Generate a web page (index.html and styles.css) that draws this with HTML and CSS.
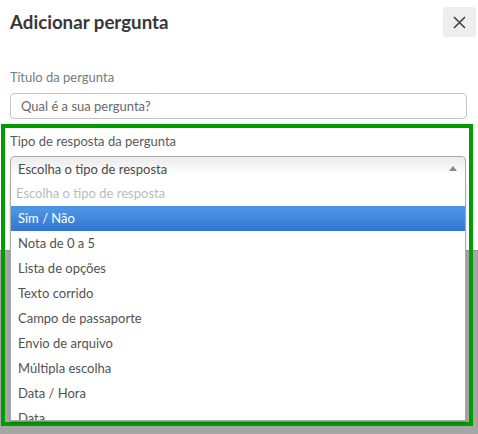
FILE: index.html
```html
<!DOCTYPE html>
<html lang="pt-BR">
<head>
    <meta charset="UTF-8">
    <meta name="viewport" content="width=device-width, initial-scale=1.0">
    <title>Adicionar pergunta</title>
    <link rel="stylesheet" href="styles.css">
</head>
<body>
    <div class="modal">
        <div class="modal-header">
            <h2>Adicionar pergunta</h2>
            <button class="close-btn" aria-label="Fechar">
                <svg width="13" height="13" viewBox="0 0 13 13">
                    <path d="M1 1 L12 12 M12 1 L1 12" stroke="#444" stroke-width="1.6" fill="none"/>
                </svg>
            </button>
        </div>

        <div class="field">
            <label for="titulo">Título da pergunta</label>
            <input type="text" id="titulo" placeholder="Qual é a sua pergunta?">
        </div>

        <div class="field highlight">
            <label>Tipo de resposta da pergunta</label>
            <div class="chosen">
                <div class="chosen-single">
                    <span>Escolha o tipo de resposta</span>
                    <b class="arrow"></b>
                </div>
                <ul class="chosen-results">
                    <li class="disabled">Escolha o tipo de resposta</li>
                    <li class="highlighted">Sim / Não</li>
                    <li>Nota de 0 a 5</li>
                    <li>Lista de opções</li>
                    <li>Texto corrido</li>
                    <li>Campo de passaporte</li>
                    <li>Envio de arquivo</li>
                    <li>Múltipla escolha</li>
                    <li>Data / Hora</li>
                    <li>Data</li>
                </ul>
            </div>
        </div>
    </div>
</body>
</html>
```

FILE: styles.css
```css
html {
    height: 100%;
}
body {
    font-family: 'Lato', 'Open Sans', sans-serif;
    /* white modal on top, grey backdrop below it */
    background: linear-gradient(#fff 250px, #939393 250px, #939393 251px, #a6a6a6 251px);
    min-height: 100%;
    margin: 0;
    color: #444;
}
.modal-header {
    display: flex;
    justify-content: space-between;
    align-items: center;
    padding: 7px 2px 0 10px;
}
.modal-header h2 {
    margin: 0;
    font-size: 18.7px;
    line-height: 30px;
    font-weight: 700;
    color: #383838;
}
.close-btn {
    width: 33px;
    height: 30px;
    border: none;
    border-radius: 3px;
    background: #eee;
    display: flex;
    align-items: center;
    justify-content: center;
    padding: 0;
}
.field {
    padding: 0 11px 0 10px;
    margin-top: 31px;
}
.field label {
    display: block;
    font-size: 13px;
    line-height: 18px;
    color: #737d82;
}
.field input {
    display: block;
    width: 100%;
    box-sizing: border-box;
    height: 26px;
    margin-top: 7px;
    padding: 0 10px;
    border: 1px solid #c4c4c4;
    border-radius: 4px;
    font-family: inherit;
    font-size: 13px;
    color: #444;
}
.field input::placeholder {
    color: #6a6a6a;
}
.field.highlight {
    margin: 5px 5px 0 1px;
    border: 4px solid #009c00;
    padding: 4px 3px 1px 5px;
}
.field.highlight label {
    color: #5a5a5a;
}
.chosen {
    margin-top: 6px;
    font-size: 13px;
}
.chosen-single {
    display: flex;
    justify-content: space-between;
    align-items: center;
    height: 24px;
    padding: 0 8px 0 7px;
    border: 1px solid #aaa;
    border-bottom: none;
    border-radius: 5px 5px 0 0;
    background: linear-gradient(#eee 15%, #fff 75%);
    color: #4a4a4a;
}
.arrow {
    width: 0;
    height: 0;
    border-left: 4px solid transparent;
    border-right: 4px solid transparent;
    border-bottom: 5px solid #888;
    margin-top: -2px;
}
.chosen-results {
    list-style: none;
    margin: 0;
    padding: 0;
    height: 239px;
    overflow: hidden;
    background: #fff;
    border: 1px solid #aaa;
    border-top: none;
    box-shadow: 0 2px 2px rgba(0, 0, 0, 0.2);
}
.chosen-results li {
    padding: 5px 7px;
    line-height: 15px;
    color: #525252;
}
.chosen-results li.disabled {
    color: #bbb;
    padding-left: 5px;
}
.chosen-results li.highlighted {
    background: linear-gradient(#4d93e3 20%, #3378d2 90%);
    color: #fff;
}
```
